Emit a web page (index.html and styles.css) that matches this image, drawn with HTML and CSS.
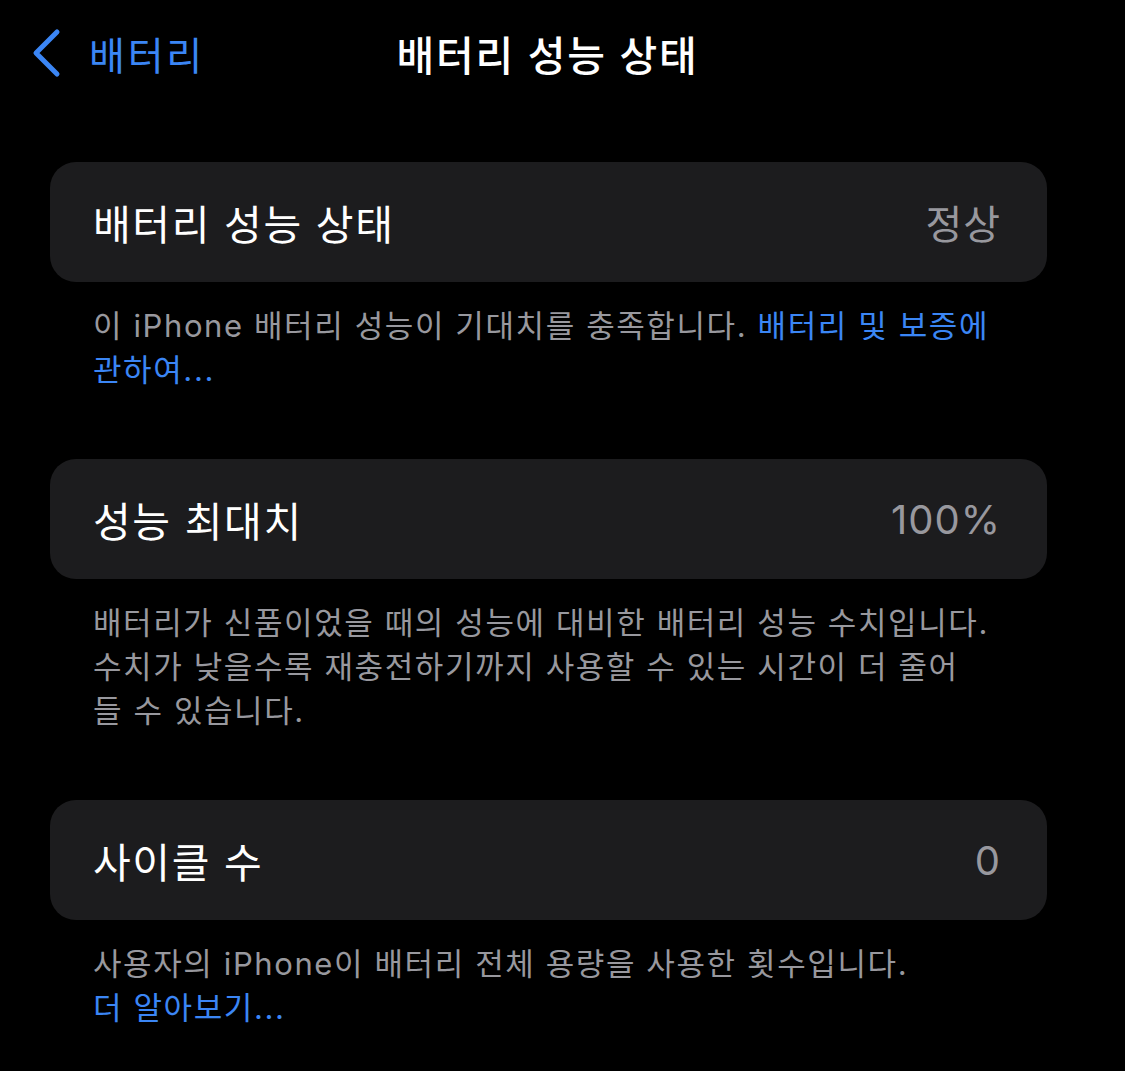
FILE: index.html
```html
<!DOCTYPE html>
<html lang="ko">
<head>
    <meta charset="UTF-8">
    <meta name="viewport" content="width=device-width, initial-scale=1.0">
    <title>배터리 성능 상태</title>
    <link rel="stylesheet" href="styles.css">
</head>
<body>

    <header class="topbar">
        <a class="back" href="#">
            <svg class="chevron" width="30" height="50" viewBox="0 0 30 50">
                <polyline points="26,4 5,25 26,46" fill="none" stroke="#3b86f5" stroke-width="5" stroke-linecap="round" stroke-linejoin="round"/>
            </svg>
            <span>배터리</span>
        </a>
        <h1 class="title">배터리 성능 상태</h1>
    </header>

    <main class="list">
        <section class="group">
            <div class="cell">
                <span class="label">배터리 성능 상태</span>
                <span class="value">정상</span>
            </div>
            <p class="footnote">이 iPhone 배터리 성능이 기대치를 충족합니다. <a href="#">배터리 및 보증에 관하여...</a></p>
        </section>

        <section class="group">
            <div class="cell">
                <span class="label">성능 최대치</span>
                <span class="value">100%</span>
            </div>
            <p class="footnote">배터리가 신품이었을 때의 성능에 대비한 배터리 성능 수치입니다. 수치가 낮을수록 재충전하기까지 사용할 수 있는 시간이 더 줄어<br>들 수 있습니다.</p>
        </section>

        <section class="group">
            <div class="cell">
                <span class="label">사이클 수</span>
                <span class="value">0</span>
            </div>
            <p class="footnote">사용자의 iPhone이 배터리 전체 용량을 사용한 횟수입니다.<br><a href="#">더 알아보기...</a></p>
        </section>
    </main>

</body>
</html>
```

FILE: styles.css
```css
body {
    margin: 0;
    background: #000;
    color: #fff;
    font-family: "Inter", "Noto Sans CJK KR", sans-serif;
    word-break: keep-all;
}

.topbar {
    position: relative;
    height: 106px;
    display: flex;
    align-items: center;
    justify-content: center;
    padding-right: 30px;
}

.back {
    position: absolute;
    left: 31px;
    top: 25px;
    display: flex;
    align-items: center;
    gap: 28px;
    color: #3b86f5;
    text-decoration: none;
    font-size: 39px;
    letter-spacing: 2.8px;
}

.title {
    margin: 0;
    font-size: 41px;
    font-weight: 500;
    letter-spacing: 1.8px;
}

.list {
    padding: 56px 78px 0 50px;
}

.group {
    margin-bottom: 67px;
}

.cell {
    height: 120px;
    background: #1c1c1e;
    border-radius: 26px;
    display: flex;
    align-items: center;
    justify-content: space-between;
    padding: 0 46px 0 43px;
}

.label {
    font-size: 41px;
    letter-spacing: 1.6px;
}

.value {
    font-size: 40px;
    color: #98989e;
    letter-spacing: 1px;
}

.footnote {
    margin: 0;
    padding: 22px 40px 0 43px;
    font-size: 31px;
    line-height: 44px;
    color: #98989e;
    letter-spacing: 1.6px;
}

.footnote a {
    color: #3b86f5;
    text-decoration: none;
}
```
